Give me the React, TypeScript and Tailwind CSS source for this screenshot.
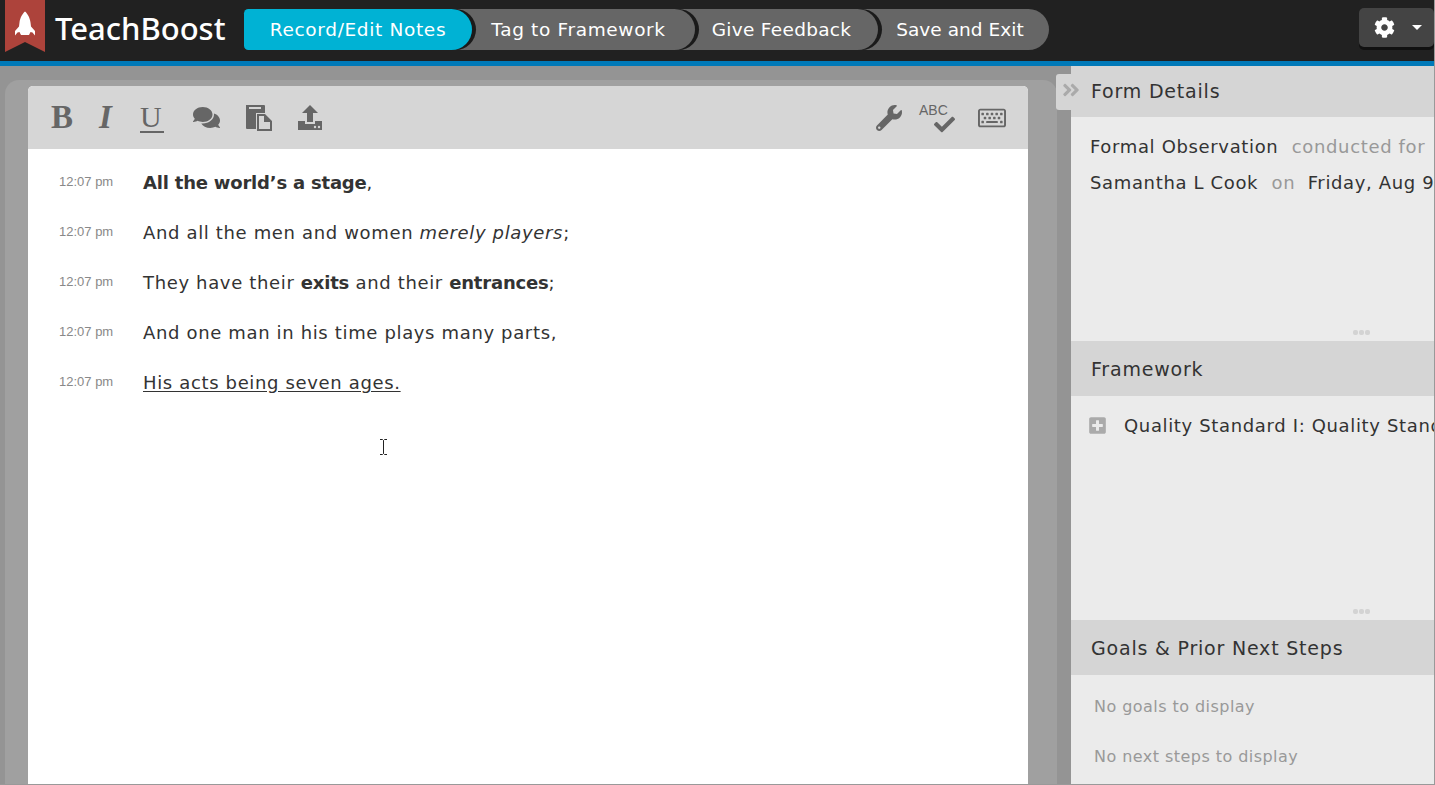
import React from "react";
import {
  FaAngleDoubleRight,
  FaCheck,
  FaCog,
  FaComments,
  FaPlusSquare,
  FaRegKeyboard,
  FaWrench,
} from "react-icons/fa";

const body = "font-['DejaVu_Sans','Liberation_Sans',sans-serif]";

const Rocket = () => (
  <svg viewBox="0 0 40 52" className="h-[52px] w-[40px] shrink-0">
    <path d="M0 0H40V52L20 42L0 52Z" fill="#ad433b" />
    <path
      d="M20 11.500C22.500 13.500 25 18 25.500 22.500L26 26.500L30 31V35.500L27.500 32.500L25.500 32L24 35H16L14.500 32L12.500 32.500L10 35.500V31L14 26.500L14.500 22.500C15 18 17.500 13.500 20 11.500Z"
      fill="#fff"
    />
  </svg>
);

const PasteIcon = () => (
  <svg viewBox="0 0 28 28" className="h-[28px] w-[28px] text-[#666]" fill="currentColor">
    <path d="M1 1H19Q20 1 20 2V9H11V25H2Q1 25 1 24Z" />
    <rect x="4" y="3" width="12" height="2" fill="#d6d6d6" />
    <path d="M12 10H20L27 17V27H12ZM14 12V25H25V18H19V12Z" />
  </svg>
);

const UploadIcon = () => (
  <svg viewBox="0 0 26 26" className="h-[26px] w-[26px] text-[#666]" fill="currentColor">
    <path d="M13 0L21 8H16V17H10V8H5Z" />
    <path d="M1 16H8V19H18V16H25V25H1Z" />
    <circle cx="18" cy="22" r="1.200" fill="#d6d6d6" />
    <circle cx="22" cy="22" r="1.200" fill="#d6d6d6" />
  </svg>
);

const CursorIcon = () => (
  <svg viewBox="0 0 9 16" className="absolute left-[379px] top-[439px] h-[16px] w-[9px]" fill="none" stroke="#222">
    <path d="M1 .5H3.500L4.500 1.500L5.500 .5H8M4.500 1.500V14.500M1 15.500H3.500L4.500 14.500L5.500 15.500H8" />
  </svg>
);

const steps = [
  { label: "Record/Edit Notes", cls: "w-[228px] bg-[#00b2d4] rounded-l-[5px] z-40 tracking-[0.65px] shadow-[4px_0_0_#1a1a1a]" },
  { label: "Tag to Framework", cls: "w-[241px] bg-[#666666] z-30 -ml-[18px] pl-[8px] tracking-[0.65px] shadow-[4px_0_0_#1a1a1a]" },
  { label: "Give Feedback", cls: "w-[201px] bg-[#666666] z-20 -ml-[18px] pl-[8px] tracking-[0.3px] shadow-[4px_0_0_#1a1a1a]" },
  { label: "Save and Exit", cls: "w-[189px] bg-[#666666] z-10 -ml-[18px] pl-[11px] tracking-[0.05px]" },
];

const notes = [
  <b key="1" className="tracking-[-0.2px]">All the world’s a stage<span className="font-normal">,</span></b>,
  <React.Fragment key="2">And all the men and women <i>merely players</i>;</React.Fragment>,
  <React.Fragment key="3">They have their <b className="tracking-[-0.2px]">exits</b> and their <b className="tracking-[-0.2px]">entrances</b>;</React.Fragment>,
  <React.Fragment key="4">And one man in his time plays many parts,</React.Fragment>,
  <u key="5" className="underline-offset-2">His acts being seven ages.</u>,
];

const SectionHeader = ({ title }: { title: string }) => (
  <div className="flex h-[55px] shrink-0 items-center bg-[#d5d5d5] pt-[2px] pl-[20px] text-[19px] tracking-[0.8px] text-[#333]">
    {title}
  </div>
);

const Grip = () => (
  <div className="mt-auto mb-[6px] ml-[282px] flex gap-[1px]">
    <span className="h-[5px] w-[5px] rounded-[2px] bg-[#d3d3d3]" />
    <span className="h-[5px] w-[5px] rounded-[2px] bg-[#d3d3d3]" />
    <span className="h-[5px] w-[5px] rounded-[2px] bg-[#d3d3d3]" />
  </div>
);

export default function App() {
  return (
    <div className={`relative flex h-[785px] w-[1435px] flex-col overflow-hidden border-r border-b border-[#999] ${body}`}>
      <header className="flex h-[61px] shrink-0 bg-[#212121]">
        <div className="ml-[5px]">
          <Rocket />
        </div>
        <div className="ml-[10px] mt-[7px] w-[170px] font-['Noto_Sans',sans-serif] text-[31px] leading-[42px] font-medium text-white">
          TeachBoost
        </div>
        <nav className="ml-[19px] mt-[9px] flex h-[41px]">
          {steps.map((s) => (
            <div
              key={s.label}
              className={`relative flex items-center justify-center rounded-r-[24px] text-[18.500px] text-white ${s.cls}`}
            >
              {s.label}
            </div>
          ))}
        </nav>
        <div className="ml-auto mt-[8px] flex h-[39px] w-[75px] items-center rounded-[5px] bg-[#444444] pl-[15px] text-white shadow-[0_3px_0_#111]">
          <FaCog className="h-[21px] w-[21px]" />
          <span className="ml-[17px] h-0 w-0 border-x-[5px] border-t-[5px] border-x-transparent border-t-white" />
        </div>
      </header>
      <div className="h-[5px] shrink-0 bg-[#0079b8]" />

      <div className="flex min-h-0 flex-1 bg-[#949494]">
        <main className="mt-[14px] ml-[5px] flex w-[1052px] shrink-0 justify-center rounded-t-[14px] bg-[#a0a0a0] pt-[6px] pr-[6px]">
          <div className="flex w-[1000px] flex-col rounded-t-[5px] bg-white">
            <div className="flex h-[63px] shrink-0 items-center rounded-t-[5px] bg-[#d6d6d6] text-[#666]">
              <span className="ml-[23px] w-[23px] font-['Liberation_Serif',serif] text-[33px] font-bold">B</span>
              <span className="ml-[25px] w-[15px] font-['Liberation_Serif',serif] text-[33px] font-bold italic">I</span>
              <span className="ml-[26px] w-[24px] border-b-2 border-[#666] font-['Liberation_Serif',serif] text-[30px] leading-[28px]">U</span>
              <FaComments className="ml-[29px] h-[27px] w-[27px]" />
              <span className="ml-[25px] flex"><PasteIcon /></span>
              <span className="ml-[24px] flex"><UploadIcon /></span>
              <span className="ml-auto flex"><FaWrench className="h-[26px] w-[26px]" /></span>
              <span className="relative ml-[17px] h-[30px] w-[37px]">
                <span className="absolute top-[-3px] left-0 font-['Liberation_Sans',sans-serif] text-[14px]">ABC</span>
                <FaCheck className="absolute top-[11px] left-[15px] h-[21px] w-[21px]" />
              </span>
              <FaRegKeyboard className="mr-[22px] ml-[22px] h-[28px] w-[28px]" />
            </div>
            <div className="flex flex-col gap-[25px] pt-[21px] pl-[31px] text-[#333]">
              {notes.map((note, i) => (
                <div key={i} className="flex h-[25px] items-center">
                  <span className="mt-[-1px] w-[84px] shrink-0 font-['Liberation_Sans',sans-serif] text-[13px] text-[#888]">
                    12:07 pm
                  </span>
                  <span className="text-[18px] tracking-[0.65px]">{note}</span>
                </div>
              ))}
            </div>
          </div>
        </main>

        <aside className="ml-[14px] flex min-w-0 flex-1 flex-col overflow-hidden bg-[#ebebeb] whitespace-nowrap">
          <div className="flex h-[51px] shrink-0 items-center bg-[#d5d5d5] pl-[20px] text-[19px] tracking-[0.8px] text-[#333]">
            Form Details
          </div>
          <div className="flex h-[224px] shrink-0 flex-col text-[18px] tracking-[0.65px] text-[#333]">
            <div className="mt-[16px] pl-[19px] leading-[27px]">
              Formal Observation <span className="ml-[7px] text-[#999]">conducted for</span>
            </div>
            <div className="mt-[9px] pl-[19px] leading-[27px]">
              Samantha L Cook <span className="mr-[6px] ml-[7px] text-[#999]">on</span> Friday, Aug 9
            </div>
            <Grip />
          </div>
          <SectionHeader title="Framework" />
          <div className="flex h-[224px] shrink-0 flex-col text-[18px] tracking-[0.65px] text-[#333]">
            <div className="mt-[16px] flex items-center leading-[27px]">
              <FaPlusSquare className="ml-[17px] h-[19px] w-[19px] shrink-0 text-[#aaa]" />
              <span className="ml-[17px]">Quality Standard I: Quality Standard</span>
            </div>
            <Grip />
          </div>
          <SectionHeader title="Goals &amp; Prior Next Steps" />
          <div className="flex flex-col gap-[25px] pt-[19px] pl-[23px] text-[16px] tracking-[0.45px] text-[#999]">
            <div className="leading-[25px]">No goals to display</div>
            <div className="leading-[25px]">No next steps to display</div>
          </div>
        </aside>
      </div>

      <div className="absolute top-[74px] left-[1056px] flex h-[36px] w-[24px] items-center rounded-l-[3px] bg-[#d5d5d5] pb-[4px] pl-[5px] text-[#aaa]">
        <FaAngleDoubleRight className="h-[20px] w-[20px] shrink-0" />
      </div>
      <CursorIcon />
    </div>
  );
}
